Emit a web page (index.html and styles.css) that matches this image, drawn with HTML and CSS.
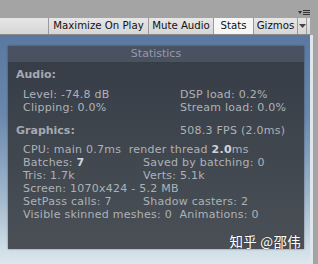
FILE: index.html
```html
<!DOCTYPE html>
<html lang="en">
  <head>
    <meta charset="UTF-8" />
    <title>Game view stats</title>
    <link rel="stylesheet" href="styles.css">
  </head>
  <body>
    <div class="topbar">
      <span class="menu-icon">
        <svg width="12" height="6" viewBox="0 0 12 6">
          <path d="M0 1h4L2 4z" fill="#333"/>
          <path d="M5 0.5h7M5 2.5h7M5 4.5h7" stroke="#333" stroke-width="1"/>
        </svg>
      </span>
    </div>
    <div class="toolbar">
      <div class="spacer"></div>
      <div class="btn maximize">Maximize On Play</div>
      <div class="btn mute">Mute Audio</div>
      <div class="btn stats-btn active">Stats</div>
      <div class="btn gizmos">Gizmos</div>
      <div class="btn drop">
        <svg width="7" height="4" viewBox="0 0 7 4"><path d="M0 0h7L3.5 4z" fill="#444"/></svg>
      </div>
    </div>
    <div class="scene">
      <div class="stats">
        <div class="stats-head">Statistics</div>
        <div class="stats-body">
          <div class="heading">Audio:</div>
          <div class="row audio">
            <span>Level: -74.8 dB</span><span>DSP load: 0.2%</span>
          </div>
          <div class="row audio">
            <span>Clipping: 0.0%</span><span>Stream load: 0.0%</span>
          </div>
          <div class="row audio graphics-head">
            <span class="heading">Graphics:</span><span>508.3 FPS (2.0ms)</span>
          </div>
          <div class="row">CPU: main 0.7ms&nbsp; render thread <b>2.0</b>ms</div>
          <div class="row pair"><span>Batches: <b>7</b></span><span>Saved by batching: 0</span></div>
          <div class="row pair"><span>Tris: 1.7k</span><span>Verts: 5.1k</span></div>
          <div class="row">Screen: 1070x424 - 5.2 MB</div>
          <div class="row pair"><span>SetPass calls: 7</span><span>Shadow casters: 2</span></div>
          <div class="row">Visible skinned meshes: 0&nbsp; Animations: 0</div>
        </div>
      </div>
      <div class="watermark">知乎 @邵伟</div>
    </div>
  </body>
</html>
```

FILE: styles.css
```css
body {
  margin: 0;
  width: 318px;
  height: 264px;
  overflow: hidden;
  background-color: #a4a4a4;
  font-family: "DejaVu Sans", sans-serif;
  display: flex;
  flex-direction: column;
}

.topbar {
  height: 18px;
  display: flex;
  justify-content: flex-end;
  align-items: flex-start;
}

.menu-icon {
  margin: 10px 8px 0 0;
  line-height: 0;
}

.toolbar {
  height: 16px;
  margin-right: 8px;
  display: flex;
  background: linear-gradient(#e6e6e6, #d6d6d6);
  border-bottom: 1px solid #8a8a8a;
}

.spacer {
  width: 48px;
  flex-shrink: 0;
}

.btn {
  flex-shrink: 0;
  font-size: 10.2px;
  color: #111;
  line-height: 16px;
  text-align: center;
  border-left: 1px solid #9a9a9a;
  white-space: nowrap;
}

.maximize { width: 99px; }
.mute { width: 64px; }
.stats-btn { width: 39px; }
.gizmos { width: 43px; }

.btn.active {
  background-color: #f6f6f6;
}

.btn.drop {
  width: 8px;
  display: flex;
  align-items: center;
  justify-content: center;
  border-right: 1px solid #9a9a9a;
}

.scene {
  flex: 1;
  position: relative;
  margin-right: 5px;
  padding: 11px 6px 0 8px;
  background: linear-gradient(#5a78a0 0%, #6a88ad 35%, #9fb6cc 70%, #dce8ee 100%);
  border-right: 3px solid #dfe7ec;
}

.stats {
  height: 203px;
  background: linear-gradient(#363c46, #4a5056);
  box-shadow: 0 0 2px rgba(0, 0, 0, 0.4);
  color: #aeb2b8;
  font-size: 11px;
  letter-spacing: 0.25px;
}

.stats-head {
  height: 16px;
  line-height: 16px;
  text-align: center;
  background-color: #4a5262;
  color: #959ba6;
  letter-spacing: 0;
}

.stats-body {
  padding: 6px 8px 0 15px;
}

.heading {
  font-weight: bold;
  color: #a6aab0;
  letter-spacing: 0;
  margin-left: -7px;
  line-height: 13px;
  margin-bottom: 7px;
}

.row {
  line-height: 13px;
  white-space: nowrap;
}

.row b {
  color: #d0d3d8;
}

.audio {
  display: grid;
  grid-template-columns: 157px auto;
}

.graphics-head {
  margin: 10px 0 6px;
}

.graphics-head .heading {
  margin-bottom: 0;
}

.pair {
  display: grid;
  grid-template-columns: 120px auto;
}

.watermark {
  position: absolute;
  right: 9px;
  bottom: 13px;
  color: #fff;
  font-family: "Noto Sans CJK SC", sans-serif;
  font-size: 13.5px;
  letter-spacing: 0.3px;
  text-shadow: 0 0 2px rgba(0, 0, 0, 0.3);
}
```
